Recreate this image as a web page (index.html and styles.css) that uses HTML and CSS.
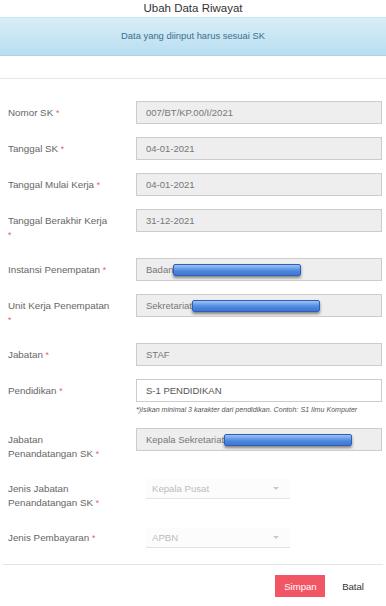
FILE: index.html
```html
<!DOCTYPE html>
<html lang="id">
<head>
  <meta charset="UTF-8" />
  <meta name="viewport" content="width=device-width, initial-scale=1.0"/>
  <title>Ubah Data Riwayat</title>
  <link rel="stylesheet" href="styles.css">
</head>
<body>
  <h4 class="modal-title">Ubah Data Riwayat</h4>
  <div class="alert-info">Data yang diinput harus sesuai SK</div>
  <div class="spacer"></div>

  <form class="form-horizontal">
    <div class="form-group">
      <label class="control-label">Nomor SK <span class="req">*</span></label>
      <div class="field"><div class="form-control readonly">007/BT/KP.00/I/2021</div></div>
    </div>
    <div class="form-group">
      <label class="control-label">Tanggal SK <span class="req">*</span></label>
      <div class="field"><div class="form-control readonly">04-01-2021</div></div>
    </div>
    <div class="form-group">
      <label class="control-label">Tanggal Mulai Kerja <span class="req">*</span></label>
      <div class="field"><div class="form-control readonly">04-01-2021</div></div>
    </div>
    <div class="form-group">
      <label class="control-label">Tanggal Berakhir Kerja <span class="req">*</span></label>
      <div class="field"><div class="form-control readonly">31-12-2021</div></div>
    </div>
    <div class="form-group">
      <label class="control-label">Instansi Penempatan <span class="req">*</span></label>
      <div class="field"><div class="form-control readonly">Badan<span class="redact"></span></div></div>
    </div>
    <div class="form-group">
      <label class="control-label">Unit Kerja Penempatan <span class="req">*</span></label>
      <div class="field"><div class="form-control readonly">Sekretariat<span class="redact"></span></div></div>
    </div>
    <div class="form-group">
      <label class="control-label">Jabatan <span class="req">*</span></label>
      <div class="field"><div class="form-control readonly">STAF</div></div>
    </div>
    <div class="form-group">
      <label class="control-label">Pendidikan <span class="req">*</span></label>
      <div class="field">
        <input class="form-control" type="text" value="S-1 PENDIDIKAN">
        <p class="help">*)Isikan minimal 3 karakter dari pendidikan. Contoh: S1 Ilmu Komputer</p>
      </div>
    </div>
    <div class="form-group">
      <label class="control-label">Jabatan Penandatangan SK <span class="req">*</span></label>
      <div class="field"><div class="form-control readonly">Kepala Sekretariat<span class="redact"></span></div></div>
    </div>
    <div class="form-group">
      <label class="control-label">Jenis Jabatan Penandatangan SK <span class="req">*</span></label>
      <div class="field">
        <div class="select">Kepala Pusat<span class="caret"></span></div>
      </div>
    </div>
    <div class="form-group">
      <label class="control-label">Jenis Pembayaran <span class="req">*</span></label>
      <div class="field">
        <div class="select">APBN<span class="caret"></span></div>
      </div>
    </div>

    <div class="modal-footer">
      <button type="button" class="btn btn-danger">Simpan</button>
      <button type="button" class="btn btn-link">Batal</button>
    </div>
  </form>
</body>
</html>
```

FILE: styles.css
```css
* {
  box-sizing: border-box;
}

body {
  margin: 0;
  font-family: 'Liberation Sans', Arial, sans-serif;
  background: #FFFFFF;
  color: #555555;
}

.modal-title {
  margin: 0;
  height: 17px;
  line-height: 17px;
  font-size: 11.5px;
  font-weight: 400;
  text-align: center;
  color: #333333;
}

.alert-info {
  height: 39px;
  line-height: 36px;
  font-size: 9.4px;
  text-align: center;
  color: #3A6F8E;
  background: linear-gradient(#D9EDF7, #B9DEF0);
  border-top: 1px solid #C8E6F3;
  border-bottom: 1px solid #A9D4E9;
}

.spacer {
  height: 23px;
  border-bottom: 1px solid #E8E8E8;
}

.form-horizontal {
  padding: 22px 4px 0 8px;
}

.form-group {
  display: flex;
  margin-bottom: 13px;
}

.control-label {
  flex: 0 0 104px;
  padding: 5px 0 3px;
  font-size: 9.8px;
  line-height: 14px;
  color: #666666;
}

.req {
  color: #E8606B;
  font-size: 8.5px;
  line-height: 0;
}

.field {
  flex: 1;
  margin-left: 24px;
}

.form-control {
  display: block;
  width: 100%;
  height: 23px;
  margin: 0;
  padding: 0 9px;
  font-family: inherit;
  font-size: 9.5px;
  line-height: 21px;
  color: #555555;
  background: #FFFFFF;
  border: 1px solid #CCCCCC;
  white-space: nowrap;
  overflow: hidden;
}

.form-control.readonly {
  background: #EEEEEE;
  color: #777777;
}

.redact {
  display: inline-block;
  width: 128px;
  height: 12px;
  vertical-align: -3px;
  background: linear-gradient(#9CC2F5, #4B86DF 60%, #3E78D3);
  border: 1px solid #2D5FB3;
  border-radius: 2px;
  box-shadow: 0 2px 3px rgba(0, 0, 0, 0.45);
}

.help {
  margin: 3px 0 0;
  font-size: 7.1px;
  line-height: 10px;
  font-style: italic;
  color: #555555;
  white-space: nowrap;
}

.select {
  position: relative;
  width: 144px;
  height: 20px;
  margin: 2px 0 0 10px;
  padding-left: 6px;
  line-height: 19px;
  font-size: 9.6px;
  color: #BBBBBB;
  background: #FCFCFC;
  border-bottom: 1px solid #E2E2E2;
}

.caret {
  position: absolute;
  right: 11px;
  top: 8px;
  border-left: 3.5px solid transparent;
  border-right: 3.5px solid transparent;
  border-top: 3.5px solid #C8C8C8;
}

.modal-footer {
  display: flex;
  justify-content: flex-end;
  gap: 8px;
  margin: 16px -1px 0 -5px;
  padding: 10px 10px 0 0;
  border-top: 1px solid #E5E5E5;
}

.btn {
  height: 22px;
  padding: 0 9px;
  font-family: inherit;
  font-size: 9.6px;
  border: none;
  border-radius: 0;
  cursor: pointer;
}

.btn-danger {
  width: 50px;
  background: #F25563;
  color: #FFFFFF;
}

.btn-link {
  background: transparent;
  color: #333333;
}
```
